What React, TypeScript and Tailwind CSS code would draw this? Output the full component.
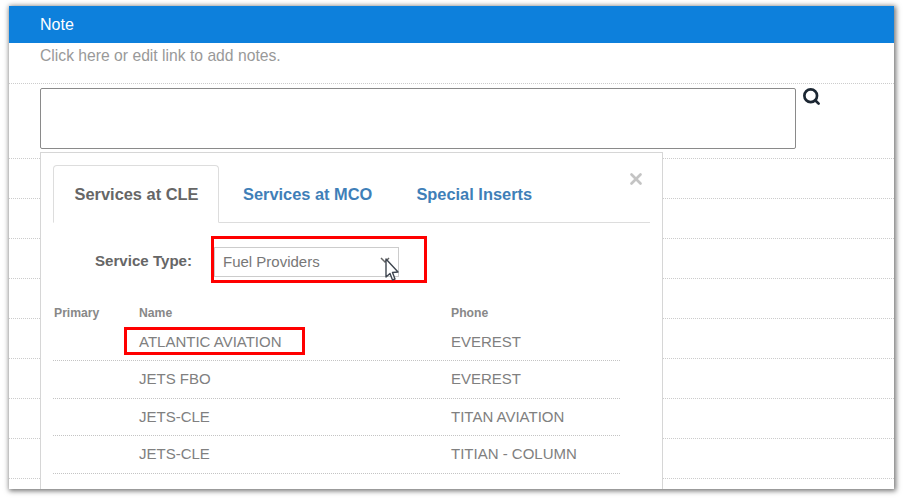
import { Search, X } from 'lucide-react';

const services = [
  { name: 'ATLANTIC AVIATION', phone: 'EVEREST' },
  { name: 'JETS FBO', phone: 'EVEREST' },
  { name: 'JETS-CLE', phone: 'TITAN AVIATION' },
  { name: 'JETS-CLE', phone: 'TITIAN - COLUMN' },
];

const emptyRows = [1, 2, 3, 4, 5, 6, 7, 8];

export default function App() {
  return (
    <div className="h-[499px] w-[903px] overflow-hidden bg-white pl-[9px] pr-[9px] pt-[6px] font-['Liberation_Sans',Arial,sans-serif]">
      <div className="relative h-[483px] w-[885px] overflow-hidden bg-white shadow-[1px_1px_5px_1px_rgba(0,0,0,0.55)]">
        <div className="flex h-[37px] items-center bg-[#0d80dc] pl-[31px] text-[16px] text-white">
          Note
        </div>

        <div className="h-[41px] border-b border-dotted border-[#ccc] pl-[31px] pt-[3px] text-[15.7px] leading-5 text-[#999]">
          Click here or edit link to add notes.
        </div>

        <div className="flex h-[75px] items-start border-b border-dotted border-[#ccc] pl-[31px] pt-[4px]">
          <div className="h-[61px] w-[756px] rounded-[2px] border border-[#8a8a8a] bg-white" />
          <Search size={19} strokeWidth={3.4} className="ml-[6px] mt-[-1px] text-[#1c2733]" />
        </div>

        {emptyRows.map((row) => (
          <div key={row} className="h-[40px] border-b border-dotted border-[#ccc]" />
        ))}

        <div className="absolute left-[31px] top-[146px] h-[340px] w-[623px] border-[1.5px] border-[#d6d6d6] bg-white pl-[12px] pr-[12px] pt-[12px]">
          <X size={18} strokeWidth={3.6} className="absolute left-[586px] top-[17px] text-[#c4c4c4]" />

          <div className="flex h-[58px] border-b border-[#ddd]">
            <div className="flex h-[58px] w-[166px] items-center justify-center rounded-t-[4px] border border-b-white border-[#ddd] bg-white pl-[1px] pt-[1px] text-[16.4px] font-bold text-[#666]">
              Services at CLE
            </div>
            <div className="ml-[24px] flex items-center pt-[1px] text-[16.4px] font-bold text-[#3f7fb8]">
              Services at MCO
            </div>
            <div className="ml-[44px] flex items-center pt-[1px] text-[16.4px] font-bold text-[#3f7fb8]">
              Special Inserts
            </div>
          </div>

          <div className="mt-[24px] flex h-[30px] items-center">
            <div className="ml-[42px] w-[119px] pb-[1px] text-[15.1px] font-bold text-[#666]">Service Type:</div>
            <div className="flex h-[30px] w-[185px] items-center border-[1.5px] border-[#ccc] pl-[8px] text-[15px] text-[#777]">
              Fuel Providers
            </div>
          </div>

          <div className="relative mt-[27px] w-[567px]">
            <div className="flex h-[19.5px] items-start pl-[1px] text-[12.2px] font-bold text-[#888]">
              <div className="w-[85px]">Primary</div>
              <div className="w-[312px]">Name</div>
              <div>Phone</div>
            </div>
            {services.map((service, i) => (
              <div
                key={i}
                className="flex h-[37.5px] items-center border-b border-dotted border-[#c4c4c4] pl-[1px] text-[15px] text-[#808080]"
              >
                <div className="w-[85px]" />
                <div className="w-[312px]">{service.name}</div>
                <div>{service.phone}</div>
              </div>
            ))}
            <div className="absolute left-[71px] top-[23px] h-[28px] w-[181px] border-[3px] border-[#f00]" />
          </div>

          <div className="absolute left-[170px] top-[83px] h-[47px] w-[216px] border-[3.5px] border-[#f00]" />

          <svg className="absolute left-[339px] top-[103px]" width="22" height="28" viewBox="0 0 22 28">
            <path d="M1 2 L5 6 L9 2" fill="none" stroke="#666" strokeWidth="1.5" />
            <path
              d="M6 3 L6 21 L10 17.5 L12.5 24 L15 23 L12.5 16.5 L18 16 Z"
              fill="#fff"
              stroke="#3f4650"
              strokeWidth="1.4"
              strokeLinejoin="round"
            />
          </svg>
        </div>
      </div>
    </div>
  );
}
